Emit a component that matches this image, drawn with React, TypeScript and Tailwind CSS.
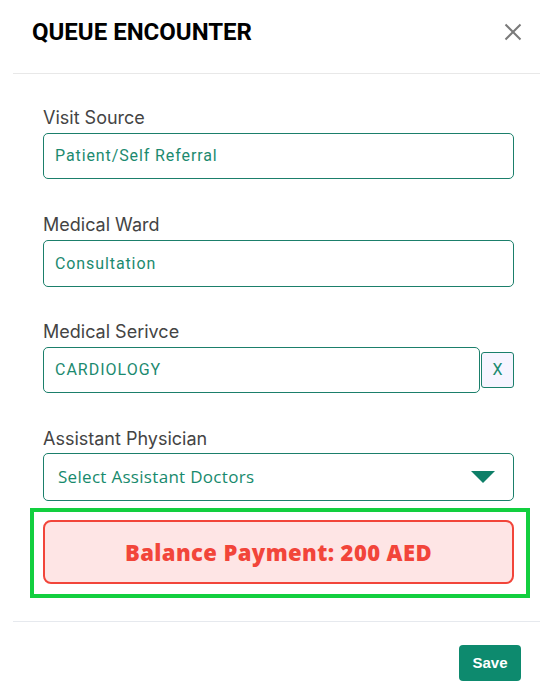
import React from "react";

export default function App() {
  return (
    <div className="w-[553px] h-[698px] bg-white relative" style={{ fontFamily: "Inter, 'Noto Sans', sans-serif" }}>
      <div className="h-[64px] flex items-center justify-between pl-[32px] pr-[28px]">
        <h1 className="text-[24px] font-bold text-black" style={{ fontFamily: "Roboto, sans-serif" }}>
          QUEUE ENCOUNTER
        </h1>
        <button className="w-[24px] h-[24px] flex items-center justify-center text-[#777]">
          <svg width="18" height="18" viewBox="0 0 18 18" fill="none" stroke="#7a7a7a" strokeWidth="2">
            <path d="M1.5 1.5 L16.5 16.5 M16.5 1.5 L1.5 16.5" />
          </svg>
        </button>
      </div>
      <div className="mt-[9px] mx-[13px] h-px bg-[#e8e8e8]" />

      <div className="pl-[43px] pr-[39px] pt-[32px]">
        <Field label="Visit Source" value="Patient/Self Referral" />
        <div className="h-[34px]" />
        <Field label="Medical Ward" value="Consultation" h="h-[47px]" />
        <div className="h-[33px]" />
        <label className="block text-[18px] leading-[24px] text-[#444]">Medical Serivce</label>
        <div className="mt-[3px] flex items-center">
          <div className="flex-1 h-[46px] border border-[#1b7f6b] rounded-[5px] flex items-center pl-[11px] text-[16px] tracking-[1px] text-[#1c8a6f]" style={{ fontFamily: "Roboto, sans-serif" }}>
            CARDIOLOGY
          </div>
          <div className="ml-px w-[33px] h-[36px] border border-[#1b7f6b] rounded-[3px] bg-[#f6f4ff] flex items-center justify-center text-[16px] text-[#1c8a6f]" style={{ fontFamily: "Roboto, sans-serif" }}>
            X
          </div>
        </div>
        <div className="h-[34px]" />
        <label className="block text-[18px] leading-[24px] text-[#444]">Assistant Physician</label>
        <div className="mt-[2px] h-[48px] border border-[#1b7f6b] rounded-[5px] flex items-center justify-between pl-[14px] pr-[18px]">
          <span className="text-[17px] tracking-[0.3px] text-[#178a6d]" style={{ fontFamily: "'Open Sans', sans-serif" }}>Select Assistant Doctors</span>
          <svg width="24" height="12" viewBox="0 0 24 12">
            <path d="M0 0 H24 L12 12 Z" fill="#0e7f68" />
          </svg>
        </div>
      </div>

      <div className="mt-[7px] ml-[30px] w-[500px] h-[90px] border-[4px] border-[#12cf3f] pt-[8px] pl-[9px]">
        <div className="w-[471px] h-[64px] rounded-[8px] border-2 border-[#f2453a] bg-[#fee5e5] flex items-center justify-center">
          <span className="text-[22px] font-extrabold tracking-[0.4px] text-[#f2453a]" style={{ fontFamily: "'Open Sans', sans-serif" }}>
            Balance Payment: 200 AED
          </span>
        </div>
      </div>

      <div className="mt-[23px] mx-[13px] h-px bg-[#e6e9ee]" />
      <div className="flex justify-end pr-[32px] pt-[23px]">
        <button className="w-[62px] h-[36px] rounded-[4px] bg-[#0d8a6e] text-white text-[15px] font-bold" style={{ fontFamily: "'Liberation Sans', Arial, sans-serif" }}>
          Save
        </button>
      </div>
    </div>
  );
}

function Field({ label, value, h = "h-[46px]" }: { label: string; value: string; h?: string }) {
  return (
    <div>
      <label className="block text-[18px] leading-[24px] text-[#444]">{label}</label>
      <div className={`mt-[3px] ${h} border border-[#1b7f6b] rounded-[5px] flex items-center pl-[11px] text-[16px] tracking-[0.9px] text-[#1c8a6f]`} style={{ fontFamily: "Roboto, sans-serif" }}>
        {value}
      </div>
    </div>
  );
}
